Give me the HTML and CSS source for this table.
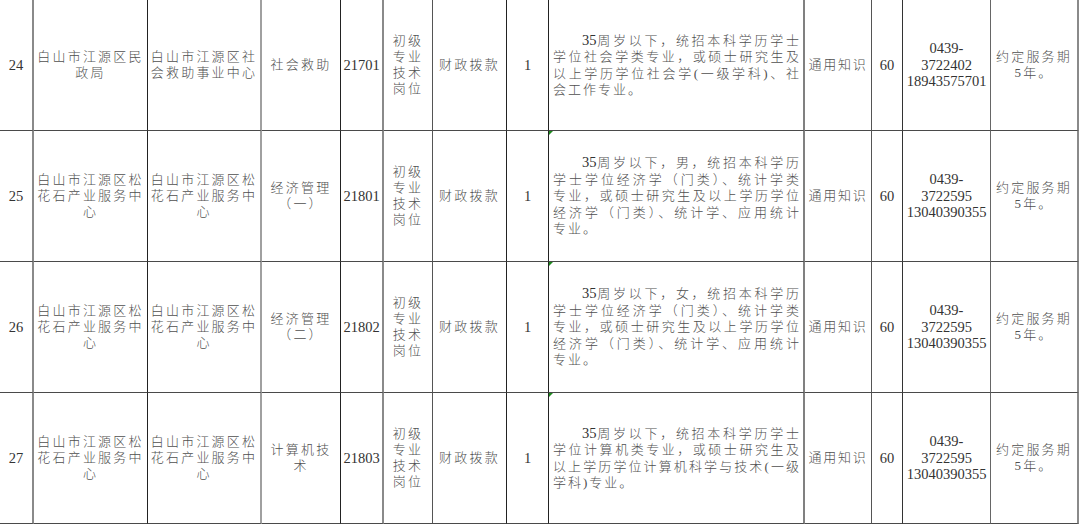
FILE: index.html
```html
<!DOCTYPE html>
<html lang="zh">
<head>
<meta charset="utf-8">
<title>岗位表</title>
<link rel="stylesheet" href="styles.css">
</head>
<body>
<table class="jobs">
  <colgroup>
    <col class="w-no"><col class="w-org"><col class="w-org"><col class="w-post">
    <col class="w-code"><col class="w-type"><col class="w-fund"><col class="w-cnt">
    <col class="w-desc"><col class="w-exam"><col class="w-score"><col class="w-tel"><col class="w-note">
  </colgroup>
  <tbody>
    <tr>
      <td class="num">24</td>
      <td>白山市江源区民政局</td>
      <td>白山市江源区社会救助事业中心</td>
      <td>社会救助</td>
      <td class="num">21701</td>
      <td>初级专业技术岗位</td>
      <td>财政拨款</td>
      <td class="num">1</td>
      <td class="desc">
        <div class="ln first"><span class="n">35</span>周岁以下，统招本科学历学士</div>
        <div class="ln">学位社会学类专业，或硕士研究生及</div>
        <div class="ln">以上学历学位社会学(一级学科)、社</div>
        <div class="ln end">会工作专业。</div>
      </td>
      <td class="tight">通用知识</td>
      <td class="num">60</td>
      <td class="num tel">0439-<br>3722402<br>18943575701</td>
      <td>约定服务期5年。</td>
    </tr>
    <tr>
      <td class="num">25</td>
      <td>白山市江源区松花石产业服务中心</td>
      <td>白山市江源区松花石产业服务中心</td>
      <td>经济管理（一）</td>
      <td class="num">21801</td>
      <td>初级专业技术岗位</td>
      <td>财政拨款</td>
      <td class="num">1</td>
      <td class="desc mark">
        <div class="ln first"><span class="n">35</span>周岁以下，男，统招本科学历</div>
        <div class="ln">学士学位经济学（门类）、统计学类</div>
        <div class="ln">专业，或硕士研究生及以上学历学位</div>
        <div class="ln">经济学（门类）、统计学、应用统计</div>
        <div class="ln end">专业。</div>
      </td>
      <td class="tight">通用知识</td>
      <td class="num">60</td>
      <td class="num tel">0439-<br>3722595<br>13040390355</td>
      <td>约定服务期5年。</td>
    </tr>
    <tr>
      <td class="num">26</td>
      <td>白山市江源区松花石产业服务中心</td>
      <td>白山市江源区松花石产业服务中心</td>
      <td>经济管理（二）</td>
      <td class="num">21802</td>
      <td>初级专业技术岗位</td>
      <td>财政拨款</td>
      <td class="num">1</td>
      <td class="desc mark">
        <div class="ln first"><span class="n">35</span>周岁以下，女，统招本科学历</div>
        <div class="ln">学士学位经济学（门类）、统计学类</div>
        <div class="ln">专业，或硕士研究生及以上学历学位</div>
        <div class="ln">经济学（门类）、统计学、应用统计</div>
        <div class="ln end">专业。</div>
      </td>
      <td class="tight">通用知识</td>
      <td class="num">60</td>
      <td class="num tel">0439-<br>3722595<br>13040390355</td>
      <td>约定服务期5年。</td>
    </tr>
    <tr>
      <td class="num">27</td>
      <td>白山市江源区松花石产业服务中心</td>
      <td>白山市江源区松花石产业服务中心</td>
      <td>计算机技术</td>
      <td class="num">21803</td>
      <td>初级专业技术岗位</td>
      <td>财政拨款</td>
      <td class="num">1</td>
      <td class="desc mark">
        <div class="ln first"><span class="n">35</span>周岁以下，统招本科学历学士</div>
        <div class="ln">学位计算机类专业，或硕士研究生及</div>
        <div class="ln">以上学历学位计算机科学与技术(一级</div>
        <div class="ln end">学科)专业。</div>
      </td>
      <td class="tight">通用知识</td>
      <td class="num">60</td>
      <td class="num tel">0439-<br>3722595<br>13040390355</td>
      <td>约定服务期5年。</td>
    </tr>
  </tbody>
</table>
</body>
</html>
```

FILE: styles.css
```css
html, body {
  margin: 0;
  padding: 0;
  background: #ffffff;
}

body {
  overflow: hidden;
}

.jobs {
  table-layout: fixed;
  width: 1079px;
  border-collapse: separate;
  border-spacing: 0;
  font-family: "Liberation Serif", "Noto Sans CJK SC", serif;
  font-size: 13px;
  font-weight: 300;
  color: #505050;
}

.w-no { width: 34px; }
.w-org { width: 114px; }
.w-post { width: 79px; }
.w-code { width: 43px; }
.w-type { width: 49px; }
.w-fund { width: 74px; }
.w-cnt { width: 42px; }
.w-desc { width: 256px; }
.w-exam { width: 67px; }
.w-score { width: 31px; }
.w-tel { width: 88px; }
.w-note { width: 88px; }

.jobs tr {
  height: 131px;
}

.jobs td {
  box-sizing: border-box;
  padding: 0 2px;
  text-align: center;
  vertical-align: middle;
  line-height: 16px;
  letter-spacing: 2.2px;
  border-bottom: 1px solid #4a4a4a;
  border-right: 1px solid #222222;
  overflow: hidden;
}

/* per-column rule colours */
.jobs td:nth-child(1) { border-right: 2px solid #8a8a8a; }
.jobs td:nth-child(3) { border-right: 2px solid #a0a0a0; }
.jobs td:nth-child(5) { border-right: 2px solid #8a8a8a; }
.jobs td:nth-child(6) { border-right-color: #555555; }
.jobs td:nth-child(9) { border-right: 2px solid #808080; }
.jobs td:nth-child(10) { border-right-color: #555555; }
.jobs td:nth-child(11) { border-right-color: #333333; }
.jobs td:nth-child(12) { border-right-color: #666666; }
.jobs td:nth-child(13) { border-right: 2px solid #8a8a8a; }

.jobs td.num {
  font-size: 14.5px;
  font-weight: 400;
  letter-spacing: 0;
  color: #333333;
}

.jobs td.tel {
  line-height: 16.5px;
}

.jobs td.tight {
  letter-spacing: 1.8px;
  padding: 0 1px;
}

.jobs td.desc {
  padding: 0 2px 0 4px;
  text-align: left;
  letter-spacing: 2px;
  line-height: 16.5px;
  white-space: nowrap;
}

.desc .ln {
  text-align: justify;
  text-align-last: justify;
}

.desc .ln.first {
  padding-left: 29px;
}

.desc .ln.end {
  text-align-last: left;
}

.desc .n {
  font-size: 14.5px;
  font-weight: 400;
  letter-spacing: 0;
  color: #333333;
}

.jobs td.mark {
  position: relative;
}

.jobs td.mark::before {
  content: "";
  position: absolute;
  top: 0;
  left: 0;
  border-top: 4px solid #1e8a1e;
  border-right: 4px solid transparent;
}
```
